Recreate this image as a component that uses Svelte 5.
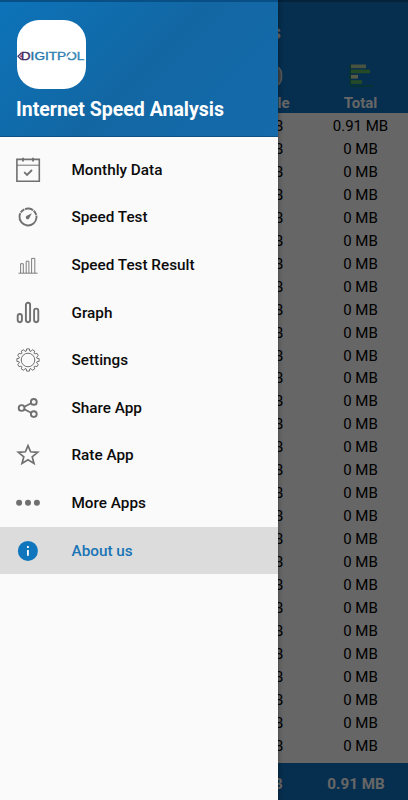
<script>
  const rows = Array.from({ length: 28 }, (_, i) => ({
    mobile: "0 MB",
    total: i === 0 ? "0.91 MB" : "0 MB",
  }));

  const items = [
    { icon: "calendar", label: "Monthly Data" },
    { icon: "speed", label: "Speed Test" },
    { icon: "result", label: "Speed Test Result" },
    { icon: "graph", label: "Graph" },
    { icon: "gear", label: "Settings" },
    { icon: "share", label: "Share App" },
    { icon: "star", label: "Rate App" },
    { icon: "more", label: "More Apps" },
    { icon: "info", label: "About us" },
  ];

  let active = $state("info");

  // outline of the settings cog, 12 teeth
  const gear = (() => {
    const pts = [];
    for (let i = 0; i < 12; i++) {
      for (const [r, o] of [[9.1, -11], [11.2, -7], [11.2, 7], [9.1, 11]]) {
        const a = ((i * 30 + o - 90) * Math.PI) / 180;
        pts.push(`${(14 + r * Math.cos(a)).toFixed(2)} ${(14 + r * Math.sin(a)).toFixed(2)}`);
      }
    }
    return "M" + pts.join("L") + "Z";
  })();
</script>

<div class="screen">
  <main class="app">
    <div class="status"></div>
    <header class="bar">
      <div class="title">Data Usages</div>
      <div class="cols heads">
        <div class="head">
          <svg width="32" height="24" viewBox="0 0 32 24">
            <rect x="12" y="2.5" width="18.5" height="19" rx="7" fill="#9ba9b5" stroke="#d5dce2" stroke-width="1.5" />
          </svg>
          <span>Mobile</span>
        </div>
        <div class="head">
          <svg width="24" height="24" viewBox="0 0 24 24">
            <path d="M1.2 0V22H24" fill="none" stroke="#128a3c" stroke-width="1" />
            <path d="M2 .5H17V4.2H2Z" fill="#b3d3a0" />
            <path d="M2 5.6H21V9.3H2Z" fill="#5cbb60" />
            <path d="M2 10.9H9V14.6H2Z" fill="#d9e3ac" />
            <path d="M2 16.2H13V19.9H2Z" fill="#5cbb60" />
          </svg>
          <span>Total</span>
        </div>
      </div>
    </header>
    <div class="table">
      {#each rows as row}
        <div class="cols row">
          <span>{row.mobile}</span>
          <span>{row.total}</span>
        </div>
      {/each}
    </div>
    <footer class="cols totals">
      <span>0 MB</span>
      <span>0.91 MB</span>
    </footer>
  </main>

  <div class="scrim"></div>

  <aside class="drawer">
    <div class="drawer-head">
      <div class="logo">
        <svg width="68" height="68" viewBox="0 0 68 68">
          <defs>
            <linearGradient id="brand" x1="0" x2="1">
              <stop offset="0" stop-color="#352257" />
              <stop offset="0.13" stop-color="#3b2d66" />
              <stop offset="0.19" stop-color="#2376ac" />
              <stop offset="1" stop-color="#3487b5" />
            </linearGradient>
          </defs>
          <path d="M4.5 31.7L1 35.2L4.5 38.7" fill="none" stroke="#4b3973" stroke-width="1.3" />
          <circle cx="4" cy="35.2" r="1" fill="#b13d65" />
          <text x="3.8" y="39.2" textLength="63.5" lengthAdjust="spacingAndGlyphs" fill="url(#brand)" stroke="url(#brand)" stroke-width=".35">DIGITPOL</text>
          <path d="M48 39.5L55 31" stroke="#fff" stroke-width="1.6" />
        </svg>
      </div>
      <div class="name">Internet Speed Analysis</div>
    </div>

    <nav>
      {#each items as item}
        <button class="item" class:active={active === item.icon} onclick={() => (active = item.icon)}>
          <svg class="icon" width="28" height="28" viewBox="0 0 28 28" fill="none" stroke="currentColor">
            {#if item.icon === "calendar"}
              <path d="M2.9 3.4H25.3V25.2H2.9Z" stroke-width="1.6" />
              <path d="M3 9.2H25" stroke-width="1" />
              <path d="M9 1.8V5.5M19 1.8V5.5" stroke-width="1.8" />
              <path d="M10.2 16.2L13 19L18 14" stroke-width="1.8" />
            {:else if item.icon === "speed"}
              <circle cx="14" cy="14" r="8.5" stroke-width="1.9" stroke-dasharray="4.7 .8 4.9 .8 31.7 .8 4.8 .8 4.1" transform="rotate(-85 14 14)" />
              <path d="M17.9 10.2L15.2 15.2A1.8 1.8 0 1 1 12.8 12.8Z" fill="currentColor" stroke="none" />
            {:else if item.icon === "result"}
              <path d="M4.5 22.2H23.5M6.6 22V12.7H9.3V22M12.2 22V10.2H14.9V22M17.6 22V7.4H20.8V22" stroke-width=".9" />
            {:else if item.icon === "graph"}
              <g stroke-width="1.9">
                <rect x="3.7" y="15" width="4.2" height="8.2" rx="2.1" />
                <rect x="11.9" y="3.7" width="4.2" height="19.5" rx="2.1" />
                <rect x="20.1" y="9.6" width="4.2" height="13.6" rx="2.1" />
              </g>
            {:else if item.icon === "gear"}
              <path d={gear} stroke-width="1" stroke-linejoin="round" />
              <circle cx="14" cy="14" r="6.8" stroke-width="1" />
            {:else if item.icon === "share"}
              <path d="M10.4 12.7L17 9.3M10.4 15.3L17 18.8" stroke-width="1.7" />
              <g stroke-width="1.9">
                <circle cx="7.6" cy="14" r="2.9" />
                <circle cx="19.8" cy="7.9" r="2.9" />
                <circle cx="19.8" cy="20.1" r="2.9" />
              </g>
            {:else if item.icon === "star"}
              <path d="M14 4.7L16.6 10.8L23.7 11.3L18.2 15.8L20 22.5L14 18.8L8 22.5L9.8 15.8L4.3 11.3L11.4 10.8Z" stroke-width="1.7" />
            {:else if item.icon === "more"}
              <g fill="currentColor" stroke="none">
                <circle cx="5.1" cy="13.8" r="3" />
                <circle cx="14" cy="13.8" r="3" />
                <circle cx="22.9" cy="13.8" r="3" />
              </g>
            {:else}
              <circle cx="13.9" cy="13.9" r="10" fill="currentColor" stroke="none" />
              <path d="M13.9 12.9V18.8M13.9 9V11" stroke="#fff" stroke-width="1.8" />
            {/if}
          </svg>
          <span>{item.label}</span>
        </button>
      {/each}
    </nav>
  </aside>
</div>

<style>
  :global(body) {
    background: #666;
  }

  .screen {
    position: relative;
    width: 408px;
    height: 800px;
    overflow: hidden;
    font-family: Roboto, sans-serif;
  }

  .app {
    display: flex;
    flex-direction: column;
    height: 100%;
    background: #fff;
  }

  .status {
    height: 2px;
    background: #0b5590;
  }

  .bar {
    height: 111px;
    background: #0f73c3;
    color: #fff;
  }

  .title {
    box-sizing: border-box;
    width: 281px;
    height: 62px;
    padding-top: 18px;
    text-align: right;
    font-size: 20px;
    line-height: 24px;
    font-weight: 500;
  }

  .cols {
    display: grid;
    grid-template-columns: 95px 95px;
    justify-content: end;
    text-align: center;
  }

  .head {
    display: flex;
    flex-direction: column;
    align-items: center;
    gap: 5px;
    font-size: 15px;
    line-height: 20px;
    font-weight: 700;
  }

  .head:first-child {
    padding-left: 2px;
  }

  .table {
    flex: 1;
    padding-top: 1px;
    color: #000;
  }

  .row {
    height: 22.96px;
    font-size: 15px;
    line-height: 24px;
  }

  .row span:first-child {
    padding-left: 1px;
  }

  .totals {
    grid-template-columns: 91px 95px;
    height: 37px;
    padding-right: 4.5px;
    background: #0f73c3;
    color: #fff;
    font-size: 15.2px;
    line-height: 42px;
    font-weight: 700;
  }

  .totals span:first-child {
    padding-left: 4px;
  }

  .scrim {
    position: absolute;
    inset: 0;
    background: rgba(0, 0, 0, 0.6);
  }

  .drawer {
    position: absolute;
    top: 0;
    left: 0;
    width: 277.5px;
    height: 100%;
    background: #fafafa;
    box-shadow: 0 0 5px rgba(0, 0, 0, 0.4);
  }

  .drawer-head {
    box-sizing: border-box;
    height: 137px;
    padding: 18px 16px 0 16.5px;
    border-top: 2px solid #084f85;
    border-bottom: 1px solid #0c5284;
    background: linear-gradient(135deg, #0d73b9 0%, #1267a3 50%, #156aab 100%);
  }

  .logo {
    width: 69px;
    height: 69px;
    display: flex;
    align-items: center;
    justify-content: center;
    border-radius: 22px;
    background: #fff;
  }

  .logo text {
    font-family: "Liberation Sans", sans-serif;
    font-size: 10.8px;
  }

  .name {
    margin: 8.5px 0 0 -0.5px;
    color: #fff;
    font-size: 19.5px;
    line-height: 24px;
    font-weight: 700;
    white-space: nowrap;
  }

  nav {
    padding-top: 9px;
  }

  .item {
    display: flex;
    align-items: center;
    gap: 29.9px;
    width: 100%;
    height: 47.6px;
    padding: 0 13.6px;
    border: none;
    background: transparent;
    color: #0c0c0c;
    font: 500 15.3px Roboto, sans-serif;
    text-align: left;
    cursor: pointer;
  }

  .icon {
    color: #707070;
  }

  .item.active {
    background: #dcdcdc;
    color: #1974b5;
  }

  .item.active .icon {
    color: #0f75bc;
  }
</style>
